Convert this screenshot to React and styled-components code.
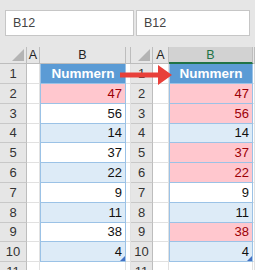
import React from "react";
import styled, { createGlobalStyle, css } from "styled-components";

const Global = createGlobalStyle`
  html, body { margin: 0; padding: 0; background: #fff; }
  body { font-family: "Liberation Sans", Arial, sans-serif; }
`;

const Page = styled.div`
  width: 255px;
  height: 270px;
  overflow: hidden;
  position: relative;
  display: flex;
  flex-direction: column;
  background: #fff;
`;

const Toolbar = styled.div`
  height: 47px;
  flex: none;
  box-sizing: border-box;
  background: #e6e6e6;
  display: flex;
  align-items: flex-start;
  gap: 2px;
  padding: 10px 0 0 5px;
`;

const NameBox = styled.div`
  width: ${(p) => p.$w}px;
  height: 26px;
  box-sizing: border-box;
  background: #fff;
  border: 1px solid #c6c6c6;
  display: flex;
  align-items: center;
  padding-left: 7px;
  font-size: 12.5px;
  color: #444;
`;

const Sheets = styled.div`
  flex: 1;
  display: flex;
  min-height: 0;
`;

const Sheet = styled.div`
  width: ${(p) => p.$w}px;
  flex: none;
  display: grid;
  grid-template-columns: ${(p) => p.$cols};
  grid-template-rows: 17px 20px repeat(10, 19.8px);
  overflow: hidden;
  font-size: 13px;
`;

const Corner = styled.div`
  background: #e6e6e6;
  border-right: 1px solid #bdbdbd;
  border-bottom: 1px solid #bdbdbd;
  box-sizing: border-box;
  position: relative;
  &::after {
    content: "";
    position: absolute;
    right: 2px;
    bottom: 2px;
    width: 0;
    height: 0;
    border-style: solid;
    border-width: 0 0 12px 12px;
    border-color: transparent transparent #b4b4b4 transparent;
  }
`;

const ColHeader = styled.div`
  background: ${(p) => (p.$sel ? "#d2d2d2" : "#e6e6e6")};
  color: ${(p) => (p.$sel ? "#217346" : "#222")};
  border-right: 1px solid #bdbdbd;
  border-bottom: ${(p) => (p.$sel ? "2px solid #217346" : "1px solid #bdbdbd")};
  box-sizing: border-box;
  display: flex;
  align-items: center;
  justify-content: center;
  font-size: 12.5px;
`;

const RowHeader = styled.div`
  background: #e6e6e6;
  color: #333;
  border-right: 1px solid #bdbdbd;
  border-bottom: 1px solid #c8c8c8;
  box-sizing: border-box;
  display: flex;
  align-items: center;
  justify-content: center;
  font-size: 13px;
`;

const Cell = styled.div`
  background: #fff;
  border-right: 1px solid #e1e1e1;
  border-bottom: 1px solid #e1e1e1;
  box-sizing: border-box;
`;

const fills = {
  head: css`background: #5b9bd5; color: #fff; font-weight: bold; justify-content: center; font-size: 13.5px;`,
  pink: css`background: #ffc7ce; color: #9c0006;`,
  blue: css`background: #ddebf7; color: #111;`,
  white: css`background: #fff; color: #111;`,
};

const TableCell = styled.div`
  position: relative;
  box-sizing: border-box;
  border-left: 1px solid #9bc2e6;
  border-right: 1px solid #9bc2e6;
  border-bottom: 1px solid #9bc2e6;
  display: flex;
  align-items: center;
  justify-content: flex-end;
  padding: 0 3px;
  ${(p) => fills[p.$fill]}
  ${(p) =>
    p.$last &&
    css`
      &::after {
        content: "";
        position: absolute;
        right: 0;
        bottom: 0;
        border-style: solid;
        border-width: 0 0 5px 5px;
        border-color: transparent transparent #4472c4 transparent;
      }
    `}
`;

const Arrow = styled.svg`
  position: absolute;
  left: 119px;
  top: 64px;
  width: 55px;
  height: 22px;
`;

const values = [47, 56, 14, 37, 22, 9, 11, 38, 4];
const leftFills = ["pink", "white", "blue", "white", "blue", "white", "blue", "white", "blue"];
const rightFills = ["pink", "pink", "blue", "pink", "pink", "white", "blue", "pink", "blue"];

function SheetView({ w, cols, fillsList, selected }) {
  const rows = [];
  rows.push(
    <React.Fragment key="h">
      <Corner />
      <ColHeader>A</ColHeader>
      <ColHeader $sel={selected}>B</ColHeader>
      <ColHeader />
    </React.Fragment>
  );
  rows.push(
    <React.Fragment key="r1">
      <RowHeader>1</RowHeader>
      <Cell />
      <TableCell $fill="head">Nummern</TableCell>
      <Cell />
    </React.Fragment>
  );
  values.forEach((v, i) => {
    rows.push(
      <React.Fragment key={"r" + (i + 2)}>
        <RowHeader>{i + 2}</RowHeader>
        <Cell />
        <TableCell $fill={fillsList[i]} $last={i === values.length - 1}>
          {v}
        </TableCell>
        <Cell />
      </React.Fragment>
    );
  });
  rows.push(
    <React.Fragment key="r11">
      <RowHeader>11</RowHeader>
      <Cell />
      <Cell />
      <Cell />
    </React.Fragment>
  );
  return (
    <Sheet $w={w} $cols={cols}>
      {rows}
    </Sheet>
  );
}

export default function App() {
  return (
    <Page>
      <Global />
      <Toolbar>
        <NameBox $w={129}>B12</NameBox>
        <NameBox $w={114}>B12</NameBox>
      </Toolbar>
      <Sheets>
        <SheetView w={131} cols="27px 13px 86px 1fr" fillsList={leftFills} />
        <SheetView w={124} cols="22px 16px 84px 1fr" fillsList={rightFills} selected />
      </Sheets>
      <Arrow viewBox="0 0 55 22">
        <path d="M1 8.5 H39 V1 L53 11 L39 21 V13.5 H1 Z" fill="#e8403a" />
      </Arrow>
    </Page>
  );
}
